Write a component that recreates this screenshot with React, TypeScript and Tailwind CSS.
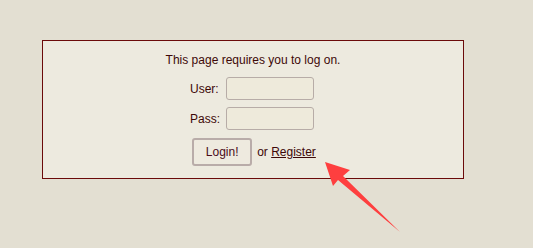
import React from "react";

export default function App() {
  return (
    <div className="relative w-[533px] h-[248px] bg-[#e3dfd2] pt-[40px] pl-[42px] font-['Liberation_Sans',Arial,sans-serif] text-[12px] text-[#3d0808]">
      <div className="w-[422px] h-[139px] border border-[#6b0a0a] bg-[#edeadf] flex flex-col items-center pt-[12px]">
        <p className="leading-[14px]">This page requires you to log on.</p>
        <div className="mt-[10px] grid grid-cols-[auto_auto] gap-x-[6px] gap-y-[7px] items-center leading-[14px] mr-[2px]">
          <label>User:</label>
          <input className="w-[88px] h-[23px] rounded-[3px] border border-[#b7aca7] bg-[#eeeadb] outline-none" />
          <label>Pass:</label>
          <input type="password" className="w-[88px] h-[23px] rounded-[3px] border border-[#b7aca7] bg-[#eeeadb] outline-none" />
        </div>
        <div className="mt-[8px] flex items-center gap-[5px] leading-[14px] ml-[2px]">
          <button className="w-[60px] h-[28px] rounded-[3px] border-2 border-[#b9aca9] bg-[#eeeadf] text-[#4a0a1a]">
            Login!
          </button>
          <span>
            or <a className="underline cursor-pointer">Register</a>
          </span>
        </div>
      </div>
      <svg className="absolute left-0 top-0" width="533" height="248" viewBox="0 0 533 248">
        <polygon
          points="325,162 350,170 343,176 400,232 338,180 333,186"
          fill="#fe3f3f"
        />
      </svg>
    </div>
  );
}
